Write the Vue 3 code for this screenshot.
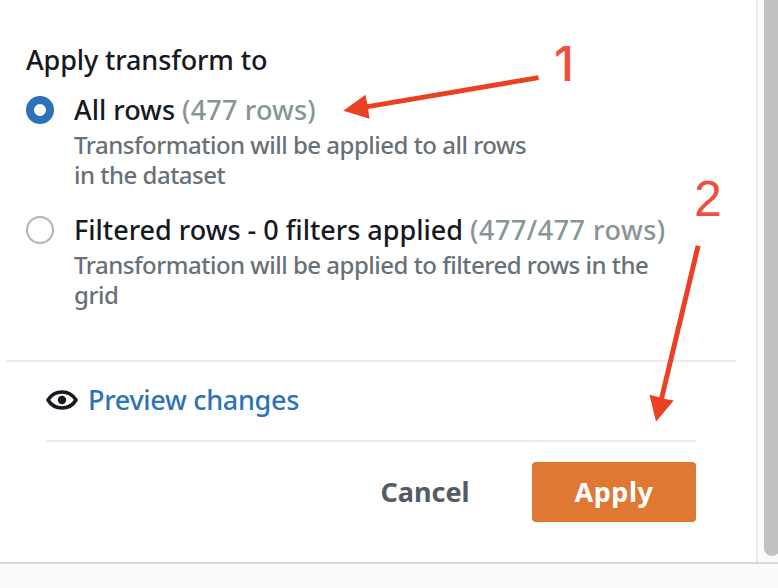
<script setup>
import { ref } from 'vue'

const selected = ref('all')
const options = [
  { id: 'all', label: 'All rows', count: '(477 rows)', lines: ['Transformation will be applied to all rows', 'in the dataset'] },
  { id: 'filtered', label: 'Filtered rows - 0 filters applied', count: '(477/477 rows)', lines: ['Transformation will be applied to filtered rows in the', 'grid'] },
]
</script>

<template>
  <div class="screen">
    <div class="main">
      <section class="panel">
        <div class="transform">
          <h2 class="title">Apply transform to</h2>
          <div
            v-for="o in options"
            :key="o.id"
            class="option"
            :class="o.id"
            @click="selected = o.id"
          >
            <span class="radio" :class="{ checked: selected === o.id }"></span>
            <div class="copy">
              <div class="label"><span>{{ o.label }}</span><span class="count">{{ o.count }}</span></div>
              <div v-for="l in o.lines" :key="l" class="desc">{{ l }}</div>
            </div>
          </div>
        </div>
        <div class="footer">
          <div class="preview">
            <svg class="eye" width="32" height="20" viewBox="0 0 32 20">
              <path d="M2 10C8.500-.7 23.500-.7 30 10C23.500 20.700 8.500 20.700 2 10Z" fill="none" stroke="#16191f" stroke-width="3.600" stroke-linejoin="round" />
              <circle cx="16" cy="10" r="4.200" fill="#16191f" />
            </svg>
            <a class="link">Preview changes</a>
          </div>
          <div class="actions">
            <button class="cancel">Cancel</button>
            <button class="apply">Apply</button>
          </div>
        </div>
      </section>
      <div class="track"><div class="thumb"></div></div>
    </div>
    <svg class="notes" width="778" height="588" viewBox="0 0 778 588">
      <g fill="#ec4025">
        <path d="M538.100 75.200L538.900 80L368.200 109.100L369.500 118.800L343.300 110.800L365.400 94.700L367.400 104.200Z" />
        <path d="M695.700 245.200L700.600 246.200L664 398.700L673.700 400.500L656 421.800L649.500 394.700L659.300 397.300Z" />
      </g>
      <g class="digits">
        <text class="one" x="554" y="81">1</text>
        <text x="694" y="216">2</text>
      </g>
    </svg>
  </div>
</template>

<style>
body { margin: 0; overflow: hidden; }
</style>

<style scoped>
.screen {
  position: relative;
  width: 778px;
  height: 588px;
  box-sizing: border-box;
  overflow: hidden;
  background: #fafafa;
  color: #16191f;
  font-family: "Noto Sans", sans-serif;
  font-weight: 500;
  white-space: nowrap;
}
.main { display: flex; height: 562px; border-bottom: 2px solid #d5dbdb; }
.panel {
  width: 756px;
  box-sizing: content-box;
  background: #fff;
  border-right: 2px solid #eaeaea;
}
.track { flex: 1; display: flex; justify-content: flex-end; background: #fafafa; overflow: hidden; }
.thumb { flex: none; width: 16px; margin-right: -2px; height: 556px; background: #c1c1c1; border-radius: 0 0 8px 8px; }
.transform { height: 360px; box-sizing: border-box; padding: 40px 0 0 26px; }
.title { margin: 0; height: 40px; line-height: 40px; font-size: 27px; font-weight: 500; letter-spacing: -0.12px; }
.option { display: flex; height: 120px; padding-top: 10px; box-sizing: border-box; }
.radio {
  flex: none;
  width: 28px;
  height: 28px;
  margin: 6px 20px 0 0;
  box-sizing: border-box;
  border: 2px solid #aab7b8;
  border-radius: 50%;
  background: #fff;
}
.radio.checked { border: 8px solid #2e73b8; }
.label { height: 40px; line-height: 40px; font-size: 27px; letter-spacing: 0; }
.count { margin-left: 7px; color: #879596; letter-spacing: 0.2px; }
.filtered .count { letter-spacing: 0.5px; }
.desc { height: 30px; line-height: 30px; font-size: 24px; letter-spacing: -0.5px; color: #687078; }
.footer { margin: 0 20px 0 6px; padding: 0 40px; border-top: 2px solid #eaeded; }
.preview {
  display: flex;
  align-items: center;
  height: 76px;
  padding-bottom: 2px;
  border-bottom: 2px solid #eaeded;
}
.eye { flex: none; margin-right: 10px; }
.link { padding-bottom: 2px; color: #2e73b8; font-size: 27px; letter-spacing: -0.3px; }
.actions { display: flex; justify-content: flex-end; padding-top: 20px; }
button {
  height: 60px;
  padding: 0;
  border: 0;
  font-family: "Noto Sans", sans-serif;
  font-size: 27px;
  font-weight: 700;
  line-height: 60px;
}
.cancel { width: 170px; margin-right: 22px; background: none; color: #545b64; }
.apply { width: 164px; border-radius: 4px; background: #df7833; color: #fff; letter-spacing: 0.5px; }
.notes { position: absolute; left: 0; top: 0; pointer-events: none; }
.digits { fill: #f04e3e; font-family: "Liberation Sans", sans-serif; font-size: 50px; font-weight: 400; }
.one { font-family: Inter, sans-serif; font-size: 48px; font-weight: 500; }
</style>
